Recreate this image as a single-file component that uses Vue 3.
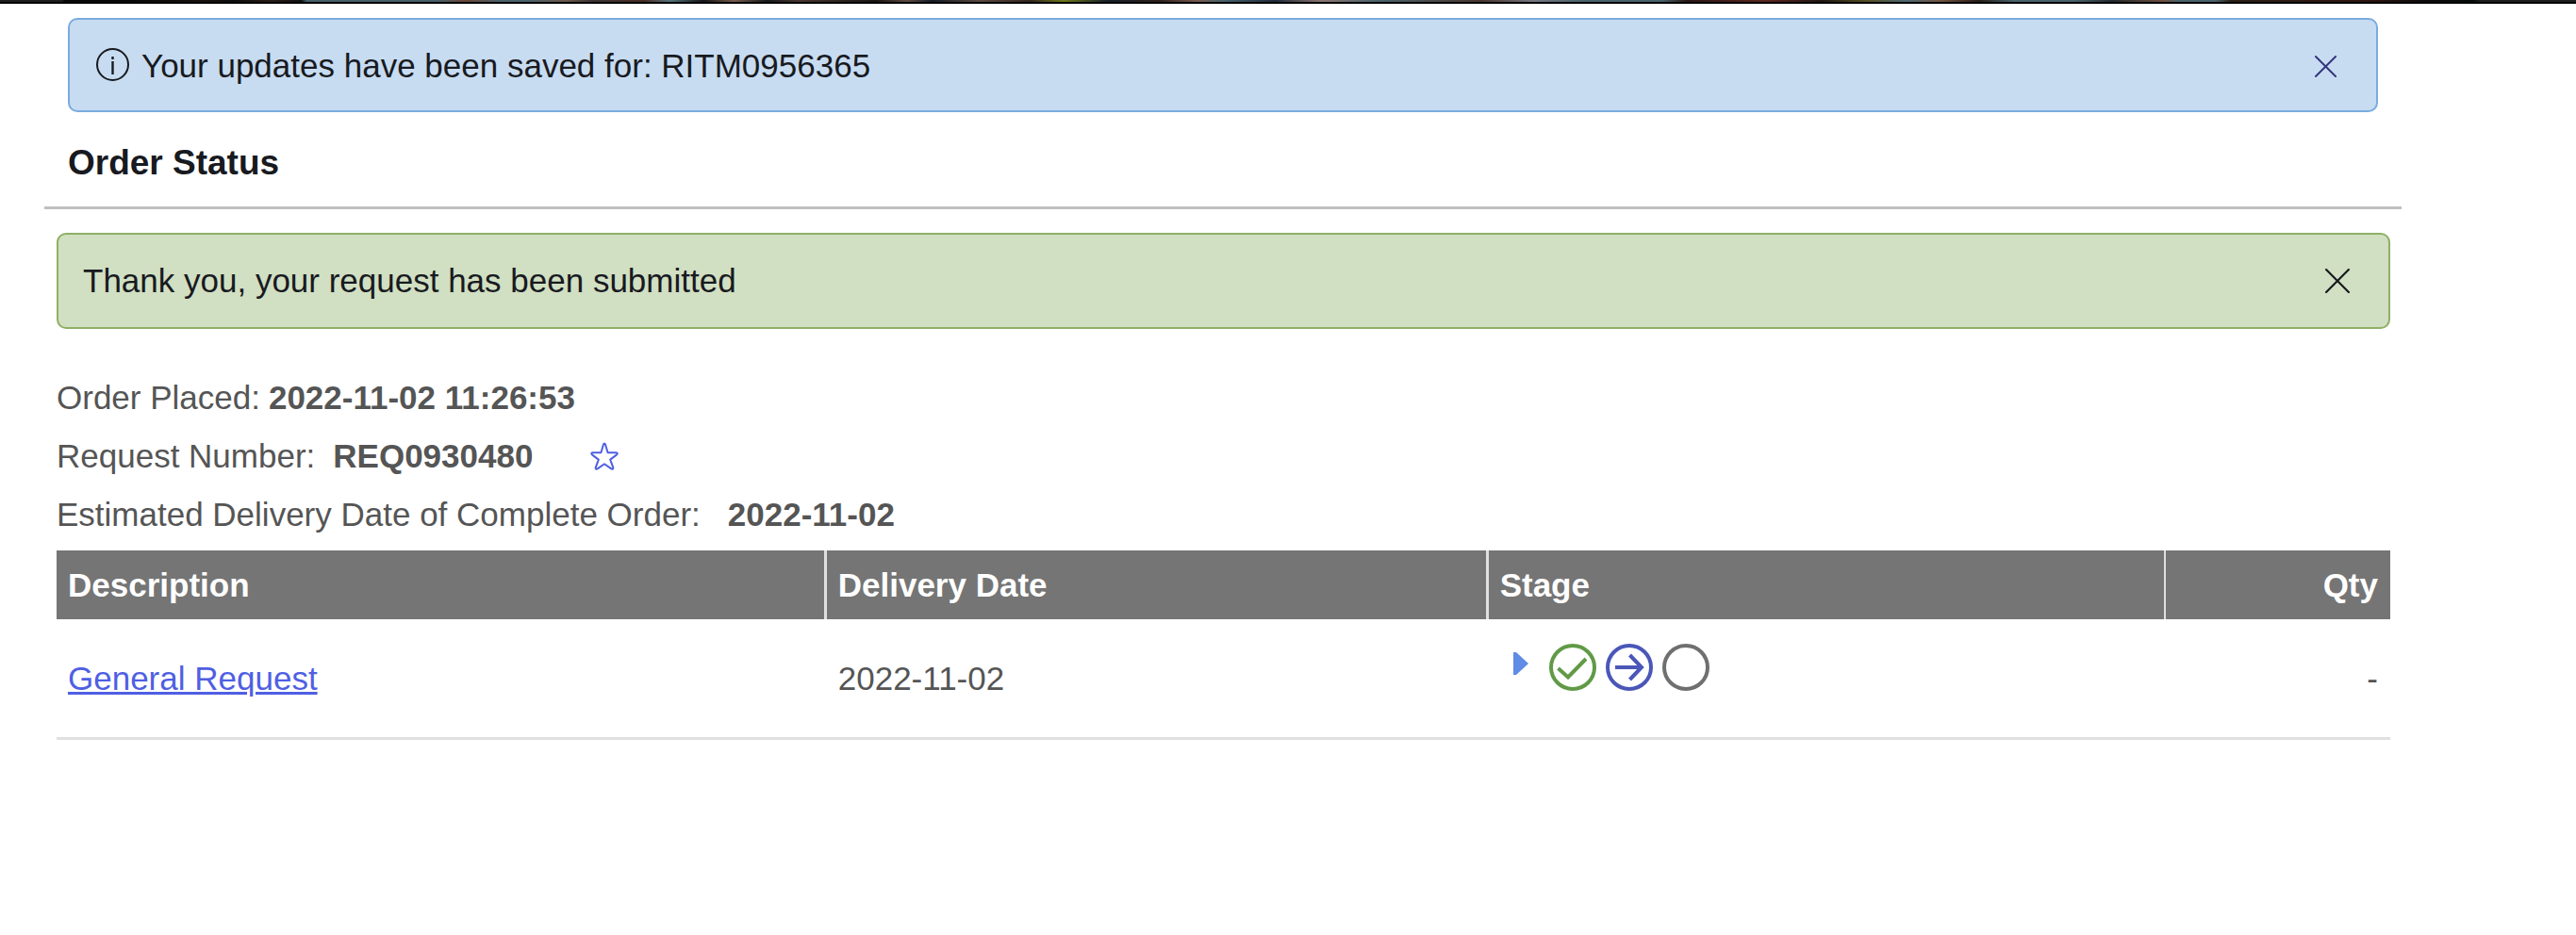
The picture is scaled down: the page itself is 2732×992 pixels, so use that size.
<script setup>
import { ref } from 'vue'

const showUpdate = ref(true)
const showThanks = ref(true)
const starred = ref(false)
const expanded = ref(false)

const items = [{ description: 'General Request', date: '2022-11-02', qty: '-' }]
</script>

<template>
  <div class="banner"></div>
  <main class="page">
    <div v-if="showUpdate" class="alert alert-info" role="status">
      <svg class="info-icon" viewBox="0 0 36 36" aria-hidden="true">
        <circle cx="17.500" cy="18.500" r="16.5" fill="none" stroke="currentColor" stroke-width="2" />
        <path d="M17.500 15v14" stroke="currentColor" stroke-width="2.4" />
        <path d="M17.500 10v3" stroke="currentColor" stroke-width="2.4" />
      </svg>
      <span class="alert-text">Your updates have been saved for: RITM0956365</span>
      <button class="close close-small" type="button" aria-label="Close update message" @click="showUpdate = false">
        <svg viewBox="0 0 24 24" aria-hidden="true"><path d="M1 1l22 22M23 1L1 23" /></svg>
      </button>
    </div>

    <h1 class="title">Order Status</h1>

    <section class="body">
      <div v-if="showThanks" class="alert alert-success" role="status">
        <span class="alert-text">Thank you, your request has been submitted</span>
        <button class="close" type="button" aria-label="Close confirmation" @click="showThanks = false">
          <svg viewBox="0 0 24 24" aria-hidden="true"><path d="M1 1l22 22M23 1L1 23" /></svg>
        </button>
      </div>

      <dl class="details">
        <div class="detail gap-one">
          <dt>Order Placed:</dt>
          <dd>2022-11-02 11:26:53</dd>
        </div>
        <div class="detail gap-two">
          <dt>Request Number:</dt>
          <dd>REQ0930480</dd>
          <dd class="star-cell">
            <button class="star" type="button" aria-label="Add to favorites" :aria-pressed="starred" @click="starred = !starred">
              <svg viewBox="0 0 30 30" aria-hidden="true">
                <path
                  d="M14 2.5Q15 0.5 16 2.5L18.6 11.3L27.5 11.3Q29.8 11.8 27.8 13.6L21.2 18.6L24.3 27.2Q24.4 29.4 22.4 28.4L15 23.2L7.6 28.4Q5.6 29.4 5.7 27.2L8.8 18.6L2.2 13.6Q0.2 11.8 2.5 11.3L11.4 11.3Z"
                  :fill="starred ? 'currentColor' : 'none'"
                  stroke="currentColor"
                  stroke-width="2"
                  stroke-linejoin="round"
                />
              </svg>
            </button>
          </dd>
        </div>
        <div class="detail gap-three">
          <dt>Estimated Delivery Date of Complete Order:</dt>
          <dd>2022-11-02</dd>
        </div>
      </dl>

      <table class="items">
        <colgroup>
          <col class="col-description" />
          <col class="col-date" />
          <col class="col-stage" />
          <col />
        </colgroup>
        <thead>
          <tr>
            <th scope="col">Description</th>
            <th scope="col">Delivery Date</th>
            <th scope="col">Stage</th>
            <th scope="col" class="qty">Qty</th>
          </tr>
        </thead>
        <tbody>
          <tr v-for="item in items" :key="item.description">
            <td><a href="#">{{ item.description }}</a></td>
            <td>{{ item.date }}</td>
            <td class="stage">
              <div class="stages">
                <button class="expand" type="button" aria-label="Show stages" :aria-expanded="expanded" @click="expanded = !expanded">
                  <svg viewBox="0 0 16 24" aria-hidden="true"><path d="M0 0h3l13 12L3 24H0z" fill="#5f8ce4" /></svg>
                </button>
                <svg class="stage-icon done" viewBox="0 0 50 50" role="img" aria-label="Completed">
                  <circle cx="25" cy="25" r="23" />
                  <path d="M9.500 26L20 35.500L39 16" />
                </svg>
                <svg class="stage-icon current" viewBox="0 0 50 50" role="img" aria-label="In progress">
                  <circle cx="25" cy="25" r="23" />
                  <path d="M10 25H37M25.500 12L38 25L25.500 38" />
                </svg>
                <svg class="stage-icon pending" viewBox="0 0 50 50" role="img" aria-label="Pending">
                  <circle cx="25" cy="25" r="23" />
                </svg>
              </div>
            </td>
            <td class="qty">{{ item.qty }}</td>
          </tr>
        </tbody>
      </table>
    </section>
  </main>
</template>

<style>
body {
  background: #fff;
}
</style>

<style scoped>
.banner {
  height: 2px;
  border-bottom: 2px solid #000;
  background: linear-gradient(
    90deg,
    #1f1f1f 0 2.4%, #080808 2.5% 5%, #1a120d 8%, #0b0d0d 9%, #2c1c16 10.5%, #111 11.7%,
    #465f69 11.9% 17%, #6b4636 18%, #4a626b 19.5% 20.5%, #6d5648 22%, #3a3434 23%, #4b2d22 25%,
    #55737d 26%, #151515 27.3%, #755c4c 28.5%, #17191b 29.8%, #49372e 31%, #1a1512 34%,
    #5f4a40 35.2%, #151c28 36.2%, #5c483e 38%, #34261f 40%, #6f7716 41.3%, #15202a 43%,
    #30201b 45%, #785b4d 46.5%, #46626c 47.5%, #202b3a 49.5%, #8d7470 51.3%, #49636c 53.5%,
    #4b352d 57.5%, #767681 59.5%, #49636c 61.5% 64.5%, #2a1614 65.5%, #5f2721 68.5%,
    #211611 70.7%, #575023 72.5%, #4d6874 74%, #735440 75.3%, #281d17 76.8%, #49636c 78.2% 80.5%,
    #252a2f 82%, #704f3d 84%, #49636c 84.6% 86%, #2c2015 86.6%, #30150f 92%, #0e0c0b 94%,
    #050b0a 96%, #1f1f1f 96.3% 100%
  );
}

.page {
  margin: 0 185px 0 47px;
  font-family: "Liberation Sans", Arial, sans-serif;
  font-size: 35px;
  line-height: 40px;
  color: #555;
}

.alert {
  display: flex;
  align-items: center;
  border: 2px solid;
  border-radius: 10px;
  color: #181a1f;
}

.alert-info {
  margin: 15px 25px 0;
  padding: 29px 42px 27px 28px;
  border-color: #7aabe0;
  background: #c7dcf1;
}

.alert-success {
  padding: 29px 41px 29px 26px;
  border-color: #8fb066;
  background: #d1dfc2;
}

.alert-text {
  flex: 1;
}

.info-icon {
  flex: none;
  align-self: flex-start;
  width: 36px;
  height: 36px;
  margin-right: 12px;
}

.close {
  flex: none;
  width: 26px;
  height: 26px;
  padding: 0;
  border: 0;
  background: none;
  color: #181a1f;
  cursor: pointer;
}

.close-small {
  width: 23px;
  height: 23px;
  color: #34347c;
}

.close svg,
.star svg,
.expand svg {
  display: block;
  width: 100%;
  height: 100%;
}

.close path {
  fill: none;
  stroke: currentColor;
  stroke-width: 2;
  stroke-linecap: round;
}

.title {
  margin: 32px 0 25px;
  padding: 0 25px 24px;
  border-bottom: 3px solid #bfbfc1;
  font-size: 37px;
  line-height: 44px;
  font-weight: bold;
  color: #181a1f;
}

.body {
  margin: 0 12px 0 13px;
}

.details {
  margin: 42px 0 7px;
  line-height: 62px;
}

.detail {
  display: flex;
  align-items: center;
}

.gap-one {
  column-gap: 9px;
}

.gap-two {
  column-gap: 19px;
}

.gap-three {
  column-gap: 29px;
}

dd {
  margin: 0;
  font-weight: bold;
}

.star-cell {
  margin-left: 42px;
}

.star {
  display: block;
  width: 30px;
  height: 30px;
  padding: 0;
  border: 0;
  background: none;
  color: #4f5fe3;
  cursor: pointer;
}

.items {
  width: 100%;
  border-collapse: separate;
  border-spacing: 0;
  table-layout: fixed;
}

.col-description {
  width: 33%;
}

.col-date {
  width: 28.36%;
}

.col-stage {
  width: 29.02%;
}

th {
  padding: 17px 12px 16px;
  border-right: 3px solid #e0e0e0;
  background: #757575;
  color: #fff;
  text-align: left;
}

th:nth-child(3) {
  border-right-width: 2px;
}

th:last-child {
  border-right: 0;
}

td {
  padding: 43px 12px 42px;
  border-bottom: 3px solid #e0e0e0;
}

.qty {
  padding-right: 13px;
  text-align: right;
}

a {
  color: #4f5fe3;
  text-decoration: underline;
  text-decoration-thickness: 3px;
}

.stage {
  padding: 26px 26px 0;
  vertical-align: top;
}

.stages {
  display: flex;
  gap: 10px;
}

.expand {
  width: 16px;
  height: 24px;
  margin: 9px 12px 0 0;
  padding: 0;
  border: 0;
  background: none;
  cursor: pointer;
}

.stage-icon {
  width: 50px;
  height: 50px;
  fill: none;
  stroke: currentColor;
  stroke-width: 4;
}

.done {
  color: #619a47;
}

.current {
  color: #4a57b8;
}

.pending {
  color: #6f6f6f;
}
</style>
